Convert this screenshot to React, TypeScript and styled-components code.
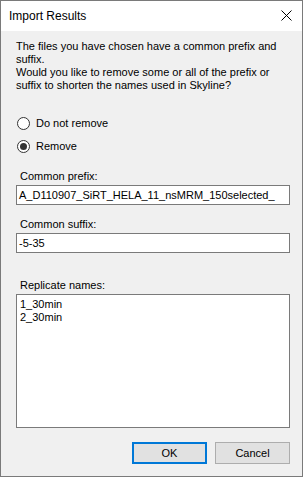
import React, { FC } from 'react';
import styled, { createGlobalStyle } from 'styled-components';

const GlobalStyle = createGlobalStyle`
  html, body {
    margin: 0;
    padding: 0;
    background: #ffffff;
  }
  * {
    box-sizing: border-box;
  }
`;

const Window = styled.div`
  width: 303px;
  height: 477px;
  display: flex;
  flex-flow: nowrap column;
  border: 1px solid #7a7a7a;
  font-family: "Liberation Sans", Arial, sans-serif;
  font-size: 11px;
  color: #000;
  overflow: hidden;
`;

const TitleBar = styled.div`
  height: 30px;
  flex: none;
  display: flex;
  align-items: center;
  justify-content: space-between;
  background: #ffffff;
  padding: 0 10px 0 8px;

  .caption {
    font-size: 12px;
    padding-bottom: 1px;
  }
`;

const CloseIcon = styled.svg`
  width: 11px;
  height: 11px;
  display: block;
  margin-bottom: 1px;
`;

const Body = styled.div`
  flex: 1;
  display: flex;
  flex-flow: nowrap column;
  background: #f0f0f0;
  padding: 9px 12px 12px 15px;
`;

const Message = styled.p`
  margin: 0 0 23px 0;
  line-height: 13px;
  width: 270px;
`;

const RadioGroup = styled.div`
  display: flex;
  flex-flow: nowrap column;
  gap: 7px;
  padding-left: 1px;
`;

const RadioRow = styled.label`
  height: 16px;
  display: flex;
  align-items: center;
  gap: 6px;
`;

const RadioDot = styled.span<{ $checked?: boolean }>`
  width: 13px;
  height: 13px;
  border-radius: 50%;
  border: 1px solid #333333;
  background: #ffffff;
  display: flex;
  align-items: center;
  justify-content: center;

  &::after {
    content: '';
    width: 7px;
    height: 7px;
    border-radius: 50%;
    background: #333333;
    display: ${(p) => (p.$checked ? 'block' : 'none')};
  }
`;

const FieldLabel = styled.div<{ $top: number }>`
  margin-top: ${(p) => p.$top}px;
  margin-bottom: 2px;
  padding-left: 4px;
  line-height: 13px;
`;

const TextBox = styled.div`
  height: 20px;
  border: 1px solid #7a7a7a;
  background: #ffffff;
  padding: 0 2px;
  display: flex;
  align-items: center;
  white-space: nowrap;
  overflow: hidden;
`;

const ListBox = styled.div`
  height: 134px;
  border: 1px solid #7a7a7a;
  background: #ffffff;
  padding: 3px 3px;
  line-height: 13px;
`;

const ButtonRow = styled.div`
  margin-top: 14px;
  display: flex;
  justify-content: flex-end;
  gap: 8px;
`;

const Button = styled.button<{ $primary?: boolean }>`
  width: 75px;
  height: 22px;
  background: #e1e1e1;
  border: ${(p) => (p.$primary ? '2px solid #0078d7' : '1px solid #adadad')};
  font-family: inherit;
  font-size: 11px;
  color: #000;
  padding: 0;
  margin: 0;
`;

const replicates = ['1_30min', '2_30min'];

const App: FC = () => (
  <>
    <GlobalStyle />
    <Window>
      <TitleBar>
        <span className="caption">Import Results</span>
        <CloseIcon viewBox="0 0 11 11">
          <path d="M0.5 0.5 L10.5 10.5 M10.5 0.5 L0.5 10.5" stroke="#000" strokeWidth="1" />
        </CloseIcon>
      </TitleBar>
      <Body>
        <Message>
          The files you have chosen have a common prefix and suffix.
          <br />
          Would you like to remove some or all of the prefix or suffix to shorten the names used in Skyline?
        </Message>
        <RadioGroup>
          <RadioRow>
            <RadioDot />
            <span>Do not remove</span>
          </RadioRow>
          <RadioRow>
            <RadioDot $checked />
            <span>Remove</span>
          </RadioRow>
        </RadioGroup>
        <FieldLabel $top={16}>Common prefix:</FieldLabel>
        <TextBox>A_D110907_SiRT_HELA_11_nsMRM_150selected_</TextBox>
        <FieldLabel $top={13}>Common suffix:</FieldLabel>
        <TextBox>-5-35</TextBox>
        <FieldLabel $top={26}>Replicate names:</FieldLabel>
        <ListBox>
          {replicates.map((name) => (
            <div key={name}>{name}</div>
          ))}
        </ListBox>
        <ButtonRow>
          <Button $primary>OK</Button>
          <Button>Cancel</Button>
        </ButtonRow>
      </Body>
    </Window>
  </>
);

export default App;
